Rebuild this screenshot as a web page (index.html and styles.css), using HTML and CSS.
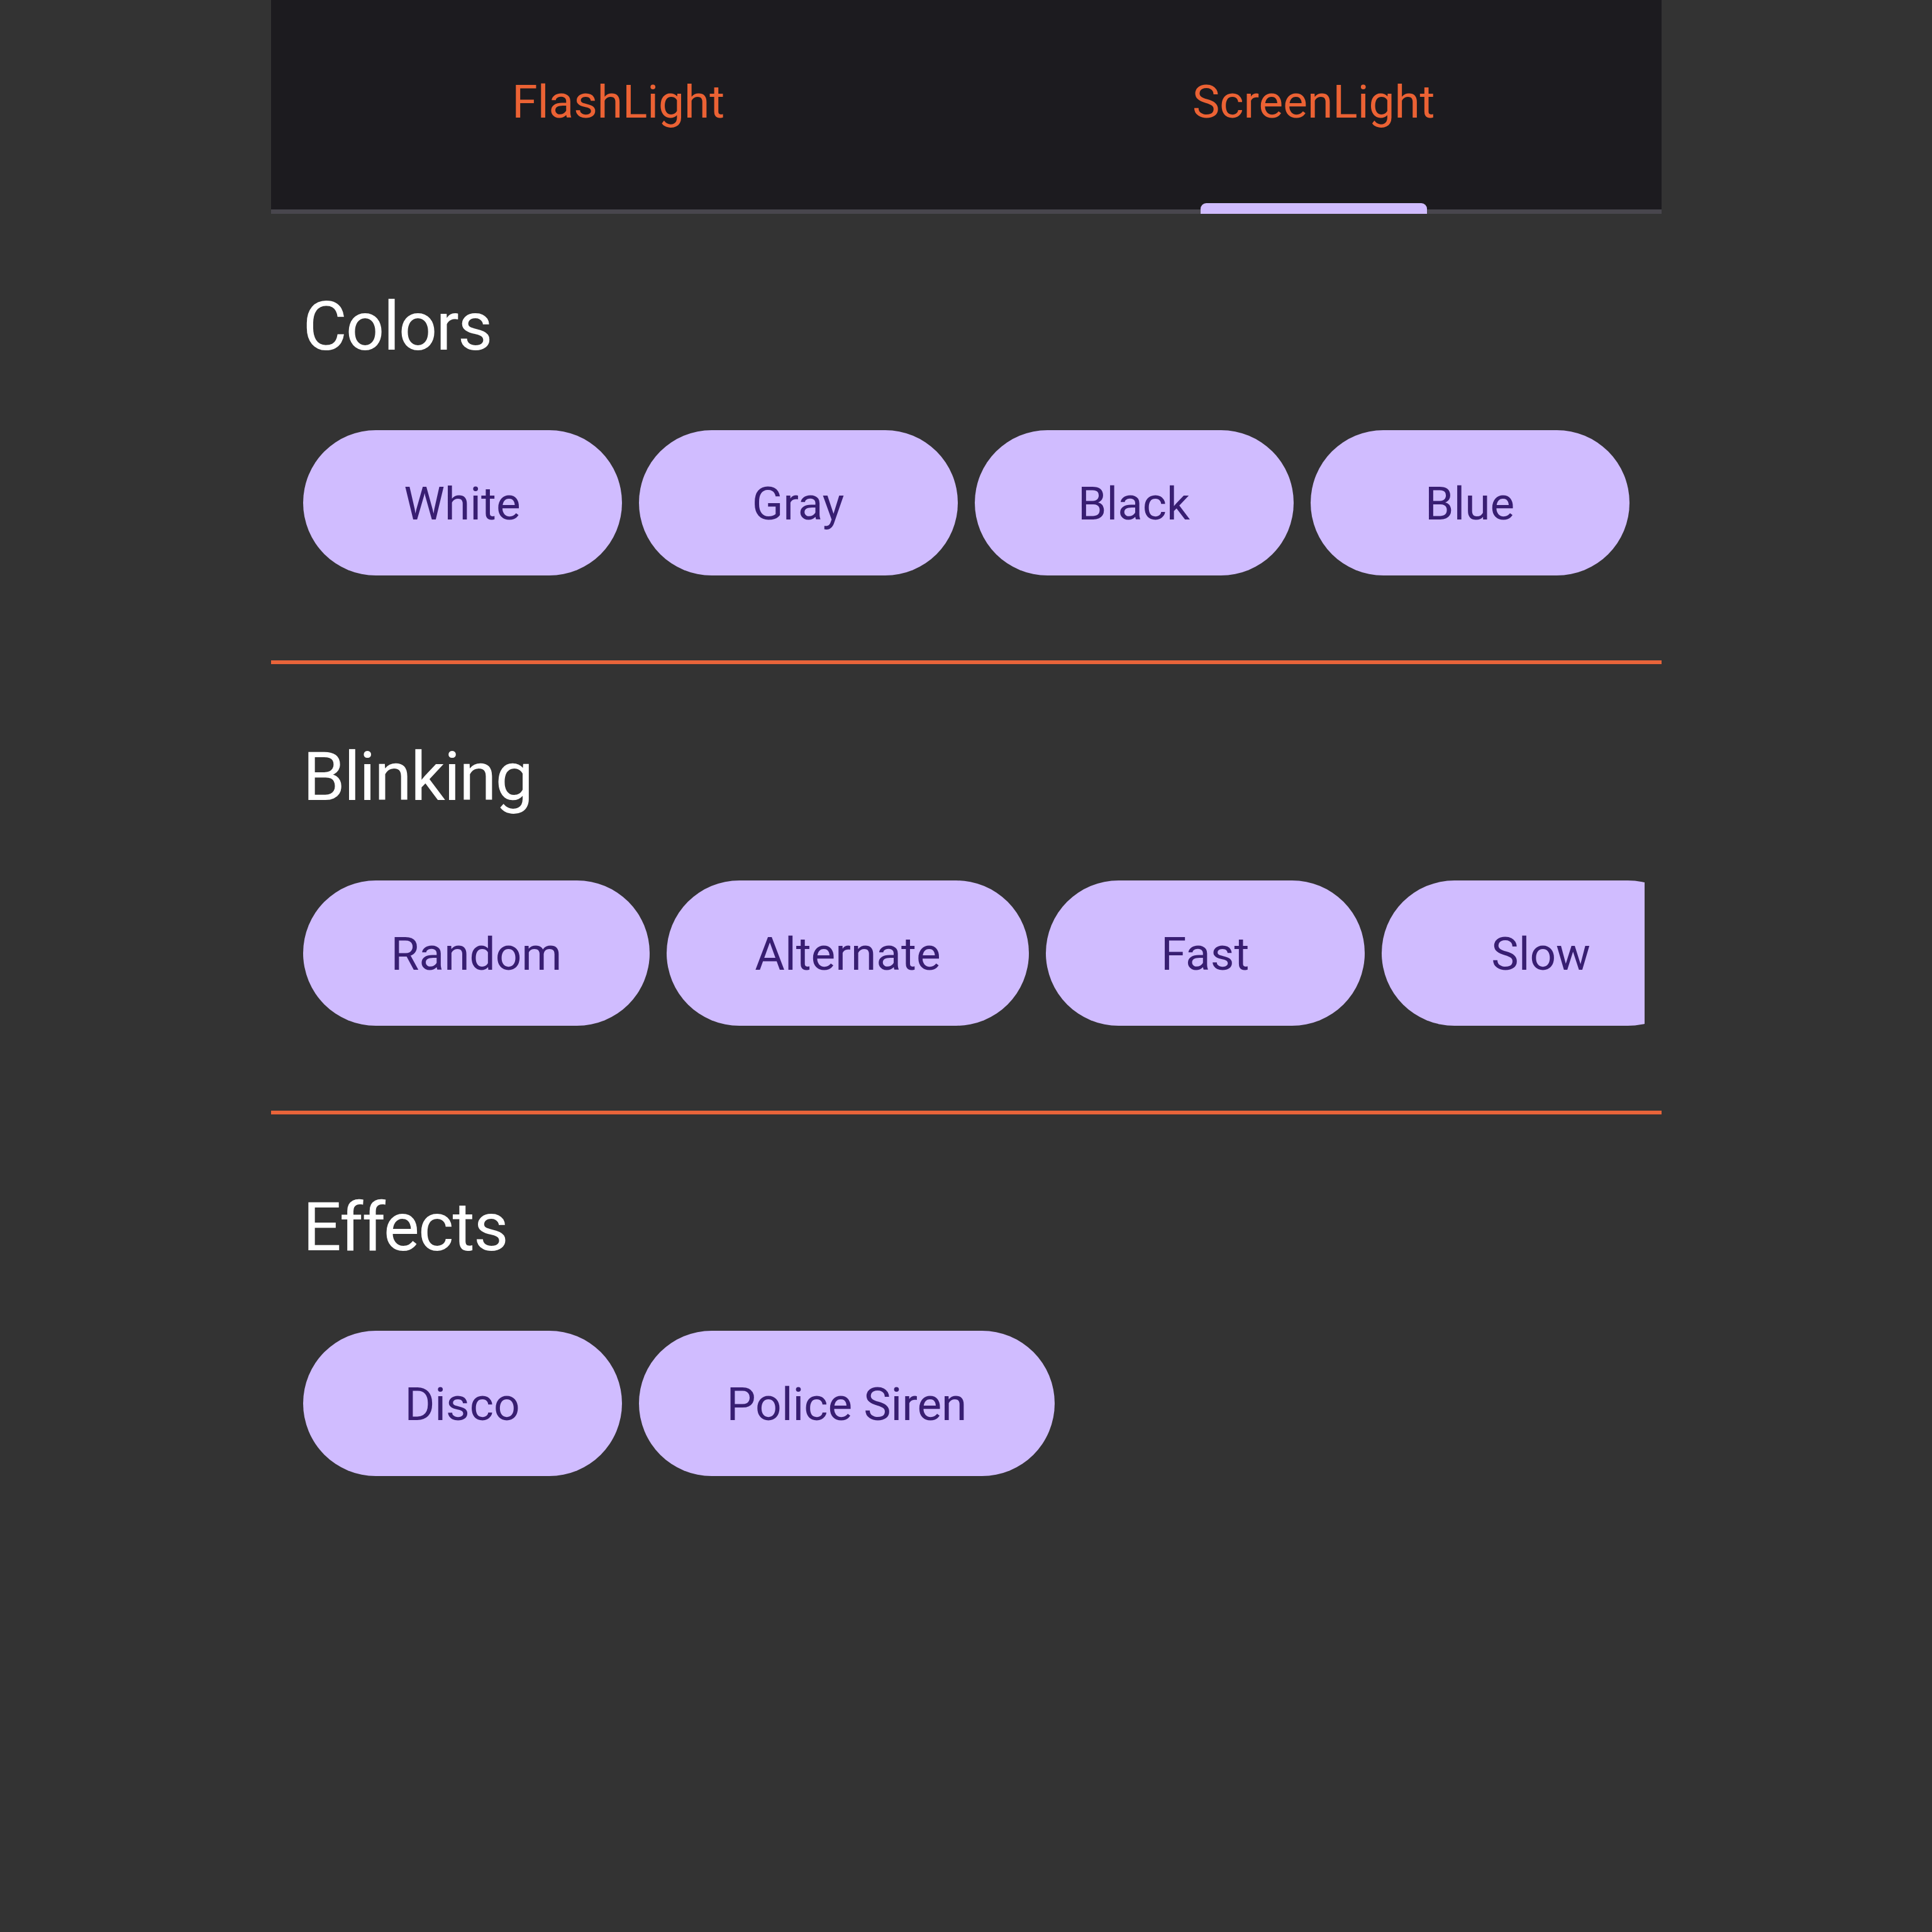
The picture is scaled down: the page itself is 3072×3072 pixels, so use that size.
FILE: index.html
```html
<!DOCTYPE html>
<html lang="en">
<head>
<meta charset="utf-8">
<title>ScreenLight</title>
<link rel="stylesheet" href="styles.css">
</head>
<body>
<div class="app">
  <nav class="tabs">
    <div class="tab">FlashLight</div>
    <div class="tab tab-active">ScreenLight<span class="indicator"></span></div>
  </nav>
  <section class="group">
    <h2 class="group-title">Colors</h2>
    <div class="chips">
      <button class="chip">White</button>
      <button class="chip">Gray</button>
      <button class="chip">Black</button>
      <button class="chip">Blue</button>
    </div>
  </section>
  <section class="group">
    <h2 class="group-title">Blinking</h2>
    <div class="chips">
      <button class="chip">Random</button>
      <button class="chip">Alternate</button>
      <button class="chip">Fast</button>
      <button class="chip">Slow</button>
    </div>
  </section>
  <section class="group group-last">
    <h2 class="group-title">Effects</h2>
    <div class="chips">
      <button class="chip">Disco</button>
      <button class="chip">Police Siren</button>
    </div>
  </section>
</div>
</body>
</html>
```
FILE: styles.css
```css
html, body {
  margin: 0;
  padding: 0;
  background: #333333;
}
body {
  width: 3072px;
  height: 3072px;
  font-family: Roboto, "Noto Sans", sans-serif;
}
.app {
  width: 2211px;
  margin: 0 auto;
}
.tabs {
  display: flex;
  height: 333px;
  background: #1c1b1f;
  border-bottom: 7px solid #48464d;
}
.tab {
  position: relative;
  flex: 1;
  display: flex;
  align-items: center;
  justify-content: center;
  padding-bottom: 9px;
  font-size: 73px;
  line-height: 73px;
  color: #eb6234;
}
.indicator {
  position: absolute;
  left: 50%;
  bottom: -7px;
  width: 360px;
  height: 17px;
  margin-left: -180px;
  background: #d0bcff;
  border-radius: 9px 9px 0 0;
}
.group {
  padding: 125px 0 135px;
  border-bottom: 6px solid #e8643a;
}
.group-last {
  border-bottom: none;
}
.group-title {
  margin: 0 0 111px 51px;
  font-size: 108px;
  line-height: 108px;
  font-weight: 400;
  letter-spacing: -2px;
  color: #ffffff;
}
.chips {
  display: flex;
  gap: 27px;
  margin-left: 51px;
  width: 2133px;
  overflow: hidden;
}
.chip {
  flex: none;
  box-sizing: border-box;
  height: 231px;
  min-width: 507px;
  padding: 3px 140px 0;
  border: none;
  border-radius: 116px;
  background: #d0bcff;
  color: #381e72;
  font-family: Roboto, "Noto Sans", sans-serif;
  font-size: 73px;
  line-height: 228px;
  font-weight: 400;
}
```
